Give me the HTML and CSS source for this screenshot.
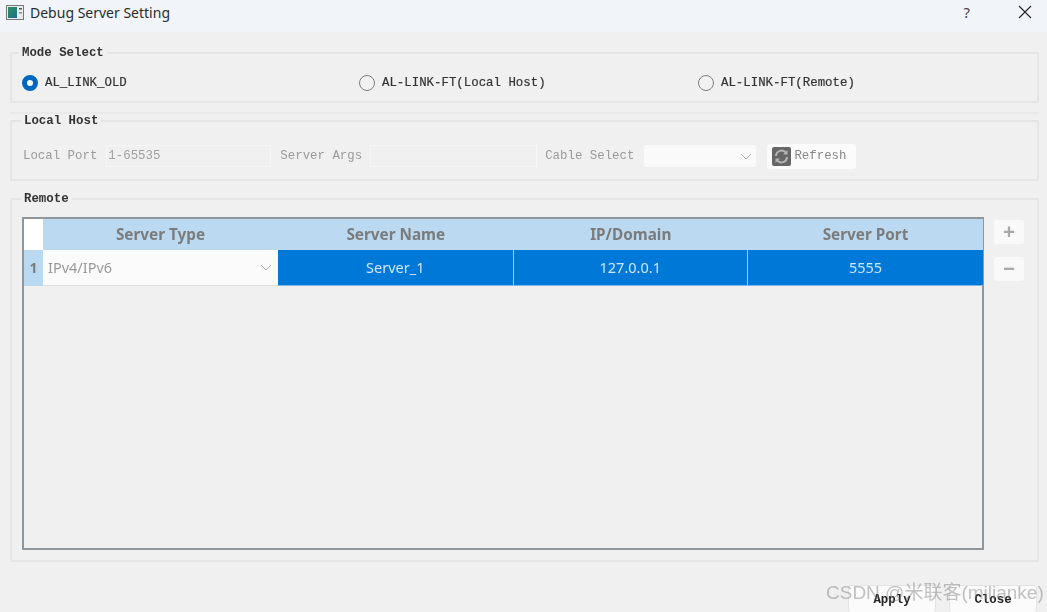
FILE: index.html
```html
<!DOCTYPE html>
<html lang="en">
<head>
<meta charset="utf-8">
<title>Debug Server Setting</title>
<link rel="stylesheet" href="styles.css">
</head>
<body>
<div class="dialog">
  <header class="titlebar">
    <svg class="appicon" width="18" height="15" viewBox="0 0 18 15">
      <defs><linearGradient id="g" x1="0" y1="0" x2="1" y2="1"><stop offset="0" stop-color="#2f8f5f"/><stop offset="1" stop-color="#1f6f8f"/></linearGradient></defs>
      <rect x="0.5" y="0.5" width="17" height="14" fill="#e8ecec" stroke="#777"/>
      <rect x="2" y="2" width="9" height="11" fill="url(#g)"/>
      <rect x="13" y="3" width="3" height="1.5" fill="#555"/>
      <rect x="13" y="7" width="3" height="1.5" fill="#888"/>
    </svg>
    <span class="title">Debug Server Setting</span>
    <span class="help">?</span>
    <svg class="close" width="14" height="14" viewBox="0 0 14 14"><path d="M1 1 L13 13 M13 1 L1 13" stroke="#222" stroke-width="1.1" fill="none"/></svg>
  </header>

  <main class="content">
    <fieldset class="group mode">
      <legend>Mode Select</legend>
      <div class="mode-row">
        <label class="radio-item first"><span class="radio checked"></span>AL_LINK_OLD</label>
        <label class="radio-item second"><span class="radio"></span>AL-LINK-FT(Local Host)</label>
        <label class="radio-item"><span class="radio"></span>AL-LINK-FT(Remote)</label>
      </div>
    </fieldset>

    <div class="stack-line"></div>

    <fieldset class="group local">
      <legend>Local Host</legend>
      <div class="local-row">
        <span class="lbl">Local Port</span>
        <span class="input port">1-65535</span>
        <span class="lbl">Server Args</span>
        <span class="input args"></span>
        <span class="lbl">Cable Select</span>
        <span class="select cable"><svg width="12" height="7" viewBox="0 0 12 7"><path d="M1 1 L6 6 L11 1" stroke="#aaa" fill="none"/></svg></span>
        <span class="btn refresh">
          <svg width="19" height="19" viewBox="0 0 19 19"><rect width="19" height="19" rx="2" fill="#666"/><path d="M4 9 A5.5 5.5 0 0 1 14 6 M15 10 A5.5 5.5 0 0 1 5 13" stroke="#b5b5b5" stroke-width="2" fill="none"/><path d="M15.5 3 V7.5 H11 Z M3.5 16 V11.5 H8 Z" fill="#b5b5b5"/></svg>
          Refresh
        </span>
      </div>
    </fieldset>

    <fieldset class="group remote">
      <legend>Remote</legend>
      <div class="remote-row">
        <div class="table">
          <div class="corner"></div>
          <div class="th">Server Type</div>
          <div class="th">Server Name</div>
          <div class="th">IP/Domain</div>
          <div class="th">Server Port</div>
          <div class="rowhead">1</div>
          <div class="combo">IPv4/IPv6<svg width="12" height="7" viewBox="0 0 12 7"><path d="M1 1 L6 6 L11 1" stroke="#aaa" fill="none"/></svg></div>
          <div class="td">Server_1</div>
          <div class="td">127.0.0.1</div>
          <div class="td">5555</div>
        </div>
        <div class="side">
          <span class="sidebtn">+</span>
          <span class="sidebtn">−</span>
        </div>
      </div>
    </fieldset>

    <footer class="actions">
      <span class="btn action">Apply</span>
      <span class="btn action">Close</span>
    </footer>
  </main>
  <div class="watermark">CSDN @米联客(milianke)</div>
</div>
</body>
</html>
```
FILE: styles.css
```css
* { box-sizing: border-box; }
html, body { margin: 0; padding: 0; }
body { width: 1047px; height: 612px; overflow: hidden; background: #f0f0f0; }
.dialog { position: relative; width: 1047px; height: 612px; overflow: hidden; font-family: "Liberation Mono", monospace; font-size: 12.4px; color: #222; filter: blur(0.35px); }

.titlebar { height: 32px; background: #f1f5fa; display: flex; align-items: center; padding: 0 15px 8px 6px; font-family: "Noto Sans", "Open Sans", sans-serif; }
.appicon { margin-right: 6px; }
.title { font-size: 14px; color: #2b2b2b; flex: 1; }
.help { font-size: 15px; color: #444; margin-right: 48px; }

.content { padding: 13px 8px 0 10px; }
.group { margin: 0; padding: 0; border: 2px solid #e5e5e5; display: block; min-width: 0; }
.group legend { margin-left: 9px; padding: 0 3px; font-weight: bold; font-size: 12.4px; line-height: 16px; color: #333; height: 16px; }
.mode legend { margin-left: 7px; }
.mode { height: 58px; }
.mode-row { display: flex; align-items: center; height: 28px; margin-top: 8px; padding-left: 10px; }
.radio-item { display: flex; align-items: center; gap: 7px; color: #333; -webkit-text-stroke: 0.2px #333; }
.radio-item.first { width: 337px; }
.radio-item.second { width: 339px; }
.radio { width: 16px; height: 16px; border-radius: 50%; border: 1.5px solid #7d7d7d; background: #f2f2f2; }
.radio.checked { border: 5px solid #0067c0; background: #fff; }

.stack-line { height: 2px; margin-top: 9px; background: #e9e9e9; }
.local { height: 68px; margin-top: -1px; }
.local-row { display: flex; align-items: center; height: 26px; margin-top: 14px; padding-left: 11px; color: #9a9a9a; }
.lbl { color: #9a9a9a; }
.input { height: 22px; line-height: 20px; background: #f0f0f0; border: 1px solid #f6f6f6; padding: 0 1px; color: #a0a0a0; }
.port { width: 165px; margin: 0 9px 0 9px; }
.args { width: 167px; margin: 0 8px 0 8px; }
.select { width: 112px; height: 22px; margin: 0 11px 0 10px; background: #fafafa; border-radius: 2px; display: flex; align-items: center; justify-content: flex-end; padding-right: 4px; }
.btn { background: #fbfbfb; border-radius: 3px; display: flex; align-items: center; justify-content: center; }
.refresh { width: 89px; height: 25px; gap: 3px; color: #888; justify-content: flex-start; padding-left: 5px; }

.remote { height: 371px; margin-top: 10px; }
.remote-row { display: flex; padding: 10px 0 0 10px; align-items: flex-start; }
.table { width: 962px; height: 333px; border: 2px solid #8f969c; display: grid; grid-template-columns: 19px 235px 235.5px 234.5px 235px; grid-template-rows: 31px 36px; align-content: start; background: #f0f0f0; font-family: "Noto Sans", "Open Sans", sans-serif; }
.corner { background: #fff; }
.th { background: #bbdaf1; color: #7b7b7b; font-weight: bold; font-size: 15.3px; display: flex; align-items: center; justify-content: center; padding-bottom: 1px; }
.rowhead { background: #bbdaf1; color: #7b7b7b; font-weight: bold; font-size: 14px; display: flex; align-items: center; justify-content: center; padding-bottom: 1px; }
.combo { background: #fbfbfb; color: #9a9a9a; font-size: 14.5px; display: flex; align-items: center; justify-content: space-between; padding: 0 6px 1px 5px; border-bottom: 1px solid #ddd; }
.td { background: #0078d7; color: #cfe7fa; font-size: 14.5px; display: flex; align-items: center; justify-content: center; padding-bottom: 1px; border-right: 1.5px solid #a9cdeb; border-bottom: 1px solid #7fb6e4; }
.td:last-child { border-right: 0; }
.side { display: flex; flex-direction: column; gap: 13px; margin: 3px 0 0 10px; }
.sidebtn { width: 30px; height: 24px; background: #f9f9f9; border-radius: 3px; color: #a8a8a8; font-family: "Noto Sans", sans-serif; font-weight: bold; font-size: 21px; line-height: 23px; text-align: center; }

.actions { display: flex; justify-content: flex-end; gap: 13px; padding: 23px 2px 0 0; }
.action { width: 88px; height: 28px; color: #222; font-weight: bold; border: 1px solid #e4e4e4; padding-top: 2px; }
.watermark { position: absolute; left: 826px; top: 581px; font-family: "Liberation Sans", "Noto Sans CJK SC", sans-serif; font-size: 19px; line-height: 24px; color: rgba(120,120,120,0.45); white-space: nowrap; }
```
